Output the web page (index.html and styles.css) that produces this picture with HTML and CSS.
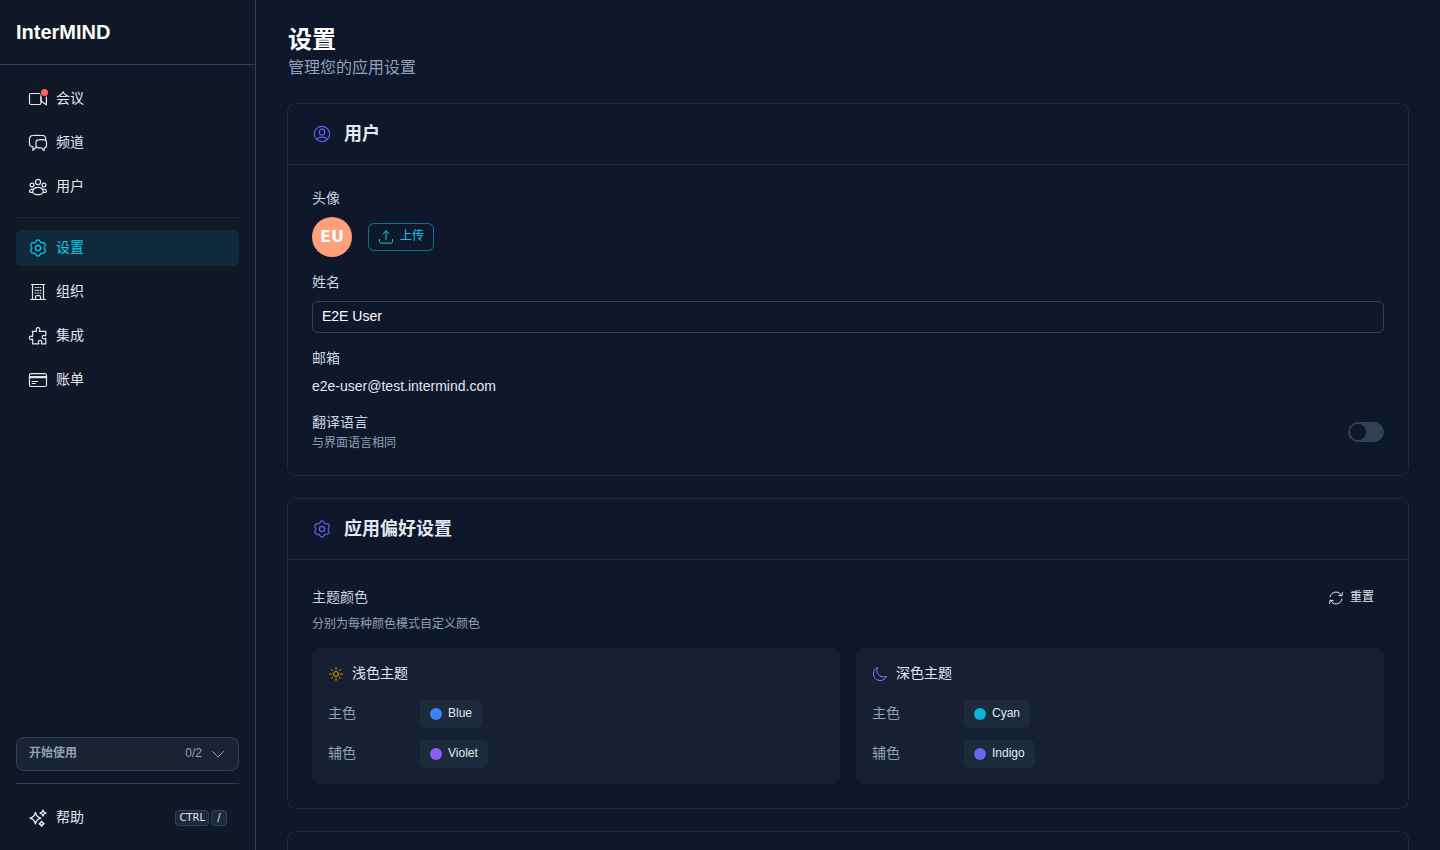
FILE: index.html
```html
<!DOCTYPE html>
<html lang="zh-CN">

<head>
    <meta charset="UTF-8">
    <meta name="viewport" content="width=device-width, initial-scale=1.0">
    <title>设置 - InterMIND</title>
    <link rel="stylesheet" href="styles.css">
</head>

<body>

    <aside class="sidebar">
        <div class="brand">InterMIND</div>

        <nav class="nav">
            <a class="nav-item" href="#meetings">
                <span class="icon-wrap">
                    <svg class="icon" viewBox="0 0 20 20"><rect x="1.5" y="4.5" width="11.5" height="11" rx="1.5"/><path d="M13 8.2V12l5.4 3.8V6"/></svg>
                    <span class="badge"></span>
                </span>
                会议
            </a>
            <a class="nav-item" href="#channels">
                <svg class="icon" viewBox="0 0 20 20"><path d="M17.6 6.4V5.2c0-1.8-1-2.6-2.8-2.7-3.4-.2-6.8-.2-10.2 0-2 .2-3.100 1.200-3.100 3.100v5.200c0 1.900.9 2.900 3.400 3v3.600l2.900-2.900"/><path d="M10.500 6.800c2-.2 4-.2 5.800 0 1.500.1 2.200.9 2.200 2.400v3.300c0 1.500-.6 2.200-2.200 2.300l-.3 2.700-2.700-2.600h-2.800C8.800 14.800 8 14 8 12.500V9.200c0-1.500.9-2.300 2.500-2.400z"/></svg>
                频道
            </a>
            <a class="nav-item" href="#users">
                <svg class="icon" viewBox="0 0 20 20"><circle cx="10" cy="5" r="2.6"/><circle cx="4" cy="8" r="1.9"/><circle cx="16" cy="8" r="1.9"/><path d="M4.600 15.200C4.800 12.200 7 10.300 10 10.300s5.200 1.900 5.400 4.900c-.8 1.500-2.800 2.500-5.400 2.500s-4.600-1-5.400-2.500zM5.200 12.300c-2.200-.6-3.600.4-3.700 2.400.9.700 1.900.9 3.300.7M14.800 12.300c2.200-.6 3.600.4 3.700 2.400-.9.700-1.900.9-3.300.7"/></svg>
                用户
            </a>

            <hr class="nav-divider">

            <a class="nav-item active" href="#settings">
                <svg class="icon" viewBox="0 0 20 20"><use href="#gear"/></svg>
                设置
            </a>
            <a class="nav-item" href="#organization">
                <svg class="icon" viewBox="0 0 20 20"><path d="M3.500 2.500h13M2.500 17.500h15M4.500 2.500v15M15.500 2.500v15M7.500 17.500v-2.300c0-1 .5-1.500 1.300-1.500h2.400c.8 0 1.300.5 1.300 1.500v2.300"/><path d="M7.200 5.500h.8M9.600 5.500h.8M12 5.500h.8M7.200 8.300h.8M9.600 8.300h.8M12 8.300h.8M7.200 11h.8M9.600 11h.8M12 11h.8"/></svg>
                组织
            </a>
            <a class="nav-item" href="#integrations">
                <svg class="icon" viewBox="0 0 20 20"><path d="M4.200 5.400h3.900c.5 0 .7-.4.4-.8C7.600 3.300 8.300 1.700 10 1.700s2.400 1.600 1.500 2.900c-.3.4-.1.8.4.8h5.900v3.900c0 .5-.4.7-.8.4-1.300-.9-2.800-.2-2.800 1.400s1.500 2.300 2.800 1.400c.4-.3.8-.1.8.4v5h-3.900c-.5 0-.7-.4-.4-.8.9-1.200.2-2.700-1.400-2.700s-2.300 1.500-1.400 2.700c.3.4.1.8-.4.8H4.700v-4.300c0-.5-.4-.7-.8-.4-1.100.8-2.500.1-2.500-1.400s1.400-2.200 2.500-1.400c.4.3.8.1.8-.4V5.400z"/></svg>
                集成
            </a>
            <a class="nav-item" href="#billing">
                <svg class="icon" viewBox="0 0 20 20"><rect x="1.500" y="3.600" width="17" height="12.900" rx="1.800"/><path d="M1.500 6.500h17M1.500 7.600h17M4.300 11.500h5.400M4.300 13.500h3"/></svg>
                账单
            </a>
        </nav>

        <div class="sidebar-footer">
            <button class="onboarding" type="button">
                <span class="onboarding-title">开始使用</span>
                <span>0/2</span>
                <svg class="icon icon-sm" viewBox="0 0 16 16"><path d="M2.500 5.500L8 11l5.500-5.500"/></svg>
            </button>
            <hr class="footer-divider">
            <a class="nav-item" href="#help">
                <svg class="icon icon-bold" viewBox="0 0 20 20"><path d="M7.400 4.400c.7 3.500 2 4.900 5.400 5.700-3.400.8-4.700 2.200-5.400 5.700-.7-3.500-2-4.900-5.400-5.700 3.400-.8 4.700-2.200 5.400-5.700zM15 2.100c.4 1.900 1.100 2.600 3 3-1.900.4-2.600 1.100-3 3-.4-1.900-1.100-2.600-3-3 1.900-.4 2.600-1.100 3-3zM13.600 13.200c.4 1.600.9 2.200 2.500 2.600-1.600.4-2.100 1-2.500 2.600-.4-1.600-.9-2.200-2.500-2.600 1.600-.4 2.100-1 2.500-2.600z"/></svg>
                帮助
                <span class="keys"><kbd>CTRL</kbd><kbd>/</kbd></span>
            </a>
        </div>
    </aside>

    <main class="content">
        <header class="page-header">
            <h1>设置</h1>
            <p>管理您的应用设置</p>
        </header>

        <section class="card">
            <div class="card-header">
                <svg class="icon" viewBox="0 0 20 20"><circle cx="10" cy="10" r="7.700"/><rect x="7.400" y="5.200" width="5.200" height="5.800" rx="2.200"/><path d="M4.800 15.500c.9-1.600 2.800-2.300 5.200-2.300s4.300.7 5.200 2.300"/></svg>
                <h2>用户</h2>
            </div>
            <div class="card-body profile">
                <div class="field">
                    <span class="label">头像</span>
                    <div class="avatar-row">
                        <span class="avatar">EU</span>
                        <button class="btn btn-outline" type="button">
                            <svg class="icon icon-sm" viewBox="0 0 16 16"><path d="M8 10.500V2M4.900 5L8 1.900 11.100 5M1.500 10.500v2c0 1 .6 1.600 1.600 1.600h9.800c1 0 1.600-.6 1.600-1.600v-2"/></svg>
                            上传
                        </button>
                    </div>
                </div>
                <div class="field">
                    <label class="label" for="name">姓名</label>
                    <input class="text-input" type="text" id="name" value="E2E User">
                </div>
                <div class="field">
                    <span class="label">邮箱</span>
                    <span class="value">e2e-user@test.intermind.com</span>
                </div>
                <div class="switch-row">
                    <div class="switch-text">
                        <label class="label" for="translation">翻译语言</label>
                        <span class="hint">与界面语言相同</span>
                    </div>
                    <input class="switch" type="checkbox" role="switch" id="translation">
                </div>
            </div>
        </section>

        <section class="card">
            <div class="card-header">
                <svg class="icon" viewBox="0 0 20 20"><use href="#gear"/></svg>
                <h2>应用偏好设置</h2>
            </div>
            <div class="card-body">
                <div class="theme-top">
                    <h3 class="label">主题颜色</h3>
                    <button class="btn" type="button">
                        <svg class="icon icon-sm" viewBox="0 0 16 16"><path d="M2.100 6.800A6 6 0 0 1 13.400 5.600M13.900 9.200A6 6 0 0 1 2.600 10.400"/><path d="M14.500 2.600l-.6 3.300-3.200-.6M1.500 13.400l.6-3.300 3.200.6"/></svg>
                        重置
                    </button>
                </div>
                <p class="hint theme-hint">分别为每种颜色模式自定义颜色</p>

                <div class="themes">
                    <div class="theme">
                        <h4>
                            <svg class="icon icon-sm sun" viewBox="0 0 16 16"><circle cx="8" cy="8" r="2.500"/><path d="M8 1.600v1.800M8 12.600v1.800M1.600 8h1.800M12.600 8h1.800M3.500 3.500l1.200 1.200M11.300 11.300l1.200 1.200M12.500 3.500l-1.200 1.200M4.700 11.300l-1.200 1.200"/></svg>
                            浅色主题
                        </h4>
                        <div class="color-row">
                            <span class="color-label">主色</span>
                            <button class="btn chip" type="button"><span class="dot blue"></span>Blue</button>
                        </div>
                        <div class="color-row">
                            <span class="color-label">辅色</span>
                            <button class="btn chip" type="button"><span class="dot violet"></span>Violet</button>
                        </div>
                    </div>
                    <div class="theme">
                        <h4>
                            <svg class="icon icon-sm moon" viewBox="0 0 16 16"><path d="M5.500 1.500C2.900 2.500 1.400 4.900 1.400 7.600c0 3.900 3.100 6.900 7 6.900 2.800 0 5.200-1.600 6.200-4.200-1 .5-2 .6-2.900.6-3.900 0-6.900-3-6.900-6.800 0-.9.2-1.800.7-2.600z"/></svg>
                            深色主题
                        </h4>
                        <div class="color-row">
                            <span class="color-label">主色</span>
                            <button class="btn chip" type="button"><span class="dot cyan"></span>Cyan</button>
                        </div>
                        <div class="color-row">
                            <span class="color-label">辅色</span>
                            <button class="btn chip" type="button"><span class="dot indigo"></span>Indigo</button>
                        </div>
                    </div>
                </div>
            </div>
        </section>

        <section class="card">
            <div class="card-header"></div>
        </section>
    </main>

    <!-- shared icons -->
    <svg class="sprite" aria-hidden="true">
        <symbol id="gear" viewBox="0 0 20 20">
            <circle cx="10" cy="10" r="2.600"/>
            <path d="M10 1.900C11.200 1.900 11.700 2.300 12 3.300 12.200 4 12.600 4.350 13.100 4.600 13.600 4.900 14.100 5.100 14.800 4.900 15.800 4.700 16.400 4.900 17 5.950 17.600 7 17.500 7.600 16.800 8.400 16.300 8.900 16.200 9.400 16.200 10 16.200 10.600 16.300 11.100 16.800 11.600 17.500 12.400 17.600 13 17 14.050 16.400 15.100 15.800 15.300 14.800 15.100 14.100 14.900 13.600 15.100 13.100 15.400 12.600 15.650 12.200 16 12 16.700 11.700 17.700 11.200 18.100 10 18.100 8.800 18.100 8.300 17.700 8 16.700 7.800 16 7.400 15.650 6.900 15.400 6.400 15.100 5.900 14.900 5.200 15.100 4.200 15.300 3.600 15.100 3 14.050 2.400 13 2.500 12.400 3.200 11.600 3.700 11.100 3.800 10.600 3.800 10 3.800 9.400 3.700 8.900 3.200 8.400 2.500 7.600 2.400 7 3 5.950 3.600 4.900 4.200 4.700 5.200 4.900 5.900 5.100 6.400 4.900 6.900 4.600 7.400 4.350 7.800 4 8 3.300 8.300 2.300 8.800 1.900 10 1.900z"/>
        </symbol>
    </svg>

</body>

</html>
```
FILE: styles.css
```css
* {
    box-sizing: border-box;
}

body {
    font-family: "Liberation Sans", "Noto Sans CJK SC", sans-serif;
    font-size: 14px;
    line-height: 1.428;
    background-color: #0f172a;
    color: #e2e8f0;
    margin: 0;
    display: flex;
    height: 100vh;
    overflow: hidden;
}

h1, h2, h3, h4, p {
    margin: 0;
}

hr {
    width: 100%;
    border: none;
    margin: 0;
}

.icon {
    width: 20px;
    height: 20px;
    flex-shrink: 0;
    fill: none;
    stroke: currentColor;
    stroke-width: 1.2;
    stroke-linecap: round;
    stroke-linejoin: round;
}

.icon-sm {
    width: 16px;
    height: 16px;
    stroke-width: 1;
}

.icon-bold {
    stroke-width: 1.4;
}

.sprite {
    display: none;
}

/* Sidebar */
.sidebar {
    width: 256px;
    flex-shrink: 0;
    display: flex;
    flex-direction: column;
    background-color: #111827;
    border-right: 1px solid #334155;
}

.brand {
    padding: 16px;
    border-bottom: 1px solid #334155;
    color: white;
    font-size: 20px;
    font-weight: bold;
    line-height: 32px;
}

.nav {
    flex: 1;
    display: flex;
    flex-direction: column;
    gap: 8px;
    padding: 16px;
}

.nav-item {
    display: flex;
    align-items: center;
    gap: 8px;
    height: 36px;
    padding: 0 12px;
    border-radius: 6px;
    color: #e2e8f0;
    text-decoration: none;
}

.nav-item.active {
    background-color: #0f2a3a;
    color: #00d3f2;
}

.nav-divider {
    height: 1px;
    margin: 4px 0;
    background-color: #1e293b;
}

.icon-wrap {
    position: relative;
    display: flex;
}

.badge {
    position: absolute;
    top: 0;
    right: 0;
    width: 7px;
    height: 7px;
    border-radius: 50%;
    background-color: #ff6467;
    box-shadow: 0 0 0 1px #111827;
}

.sidebar-footer {
    padding: 0 16px 14px;
}

.onboarding {
    display: flex;
    align-items: center;
    gap: 8px;
    width: 100%;
    height: 34px;
    padding: 0 12px;
    border: 1px solid #334155;
    border-radius: 8px;
    background-color: #1a2332;
    color: #90a1b9;
    font-family: inherit;
    font-size: 12px;
    line-height: 1.333;
    cursor: pointer;
}

.onboarding-title {
    flex: 1;
    text-align: left;
    font-weight: bold;
}

.footer-divider {
    height: 1px;
    margin: 12px 0 16px;
    background-color: #334155;
}

.keys {
    display: flex;
    gap: 2px;
    margin-left: auto;
}

kbd {
    min-width: 16px;
    height: 16px;
    padding: 0 3px;
    border: 1px solid #314158;
    border-radius: 4px;
    background-color: #1d293d;
    font-family: "DejaVu Sans", sans-serif;
    font-size: 10px;
    line-height: 14px;
    text-align: center;
}

/* Page */
.content {
    flex: 1;
    display: flex;
    flex-direction: column;
    gap: 24px;
    padding: 24px 32px;
    overflow-y: auto;
    scrollbar-width: none;
}

.page-header h1 {
    color: white;
    font-size: 24px;
    line-height: 32px;
}

.page-header p {
    color: #90a1b9;
    font-size: 16px;
    line-height: 24px;
}

.card {
    flex-shrink: 0;
    border-radius: 8px;
    box-shadow: 0 0 0 1px #1e293b;
}

.card-header {
    display: flex;
    align-items: center;
    gap: 12px;
    min-height: 61px;
    padding: 16px 24px;
    border-bottom: 1px solid #1e293b;
    color: #615fff;
}

.card-header h2 {
    color: #e2e8f0;
    font-size: 18px;
    line-height: 28px;
}

.card-body {
    padding: 24px;
}

.profile {
    display: flex;
    flex-direction: column;
    gap: 16px;
}

.field {
    display: flex;
    flex-direction: column;
    gap: 8px;
}

.label {
    color: #cad5e2;
    font-size: 14px;
    font-weight: normal;
}

.hint {
    color: #90a1b9;
    font-size: 12px;
    line-height: 16px;
}

.avatar-row {
    display: flex;
    align-items: center;
    gap: 16px;
}

.avatar {
    width: 40px;
    height: 40px;
    border-radius: 50%;
    background-color: #ffa07a;
    color: white;
    font-family: "DejaVu Sans", sans-serif;
    font-size: 16px;
    font-weight: bold;
    line-height: 40px;
    text-align: center;
}

.btn {
    display: flex;
    align-items: center;
    gap: 6px;
    height: 28px;
    padding: 0 10px;
    border: none;
    border-radius: 6px;
    background: none;
    color: #e2e8f0;
    font-family: inherit;
    font-size: 12px;
    line-height: 1.333;
    cursor: pointer;
}

.btn-outline {
    box-shadow: inset 0 0 0 1px #08758e;
    color: #00d3f2;
}

.text-input {
    width: 100%;
    height: 32px;
    padding: 0 9px 2px;
    border: 1px solid #314158;
    border-radius: 6px;
    background-color: #0f172a;
    color: white;
    font-family: inherit;
    font-size: 14px;
}

.switch-row {
    display: flex;
    align-items: center;
    justify-content: space-between;
}

.switch-text {
    display: flex;
    flex-direction: column;
    gap: 2px;
}

.switch {
    appearance: none;
    display: flex;
    width: 36px;
    height: 20px;
    margin: 0;
    padding: 2px;
    border-radius: 10px;
    background-color: #314158;
    cursor: pointer;
}

.switch::before {
    content: "";
    width: 16px;
    height: 16px;
    border-radius: 50%;
    background-color: #0f172a;
}

.switch:checked {
    justify-content: flex-end;
    background-color: #00d3f2;
}

/* Theme colors */
.theme-top {
    display: flex;
    align-items: center;
    justify-content: space-between;
}

.theme-hint {
    margin: 4px 0 16px;
}

.themes {
    display: grid;
    grid-template-columns: 1fr 1fr;
    gap: 16px;
}

.theme {
    display: flex;
    flex-direction: column;
    gap: 12px;
    padding: 16px;
    border-radius: 8px;
    background-color: #172033;
}

.theme h4 {
    display: flex;
    align-items: center;
    gap: 8px;
    margin-bottom: 4px;
    font-size: 14px;
    font-weight: normal;
}

.color-row {
    display: flex;
    align-items: center;
    gap: 12px;
}

.color-label {
    width: 80px;
    color: #90a1b9;
}

.chip {
    background-color: #1c2a3b;
}

.dot {
    width: 12px;
    height: 12px;
    border-radius: 50%;
}

.sun {
    color: #fe9a00;
}

.moon {
    color: #7c86ff;
}

.blue {
    background-color: #3b82f6;
}

.violet {
    background-color: #8b5cf6;
}

.cyan {
    background-color: #06b6d4;
}

.indigo {
    background-color: #6366f1;
}
```
